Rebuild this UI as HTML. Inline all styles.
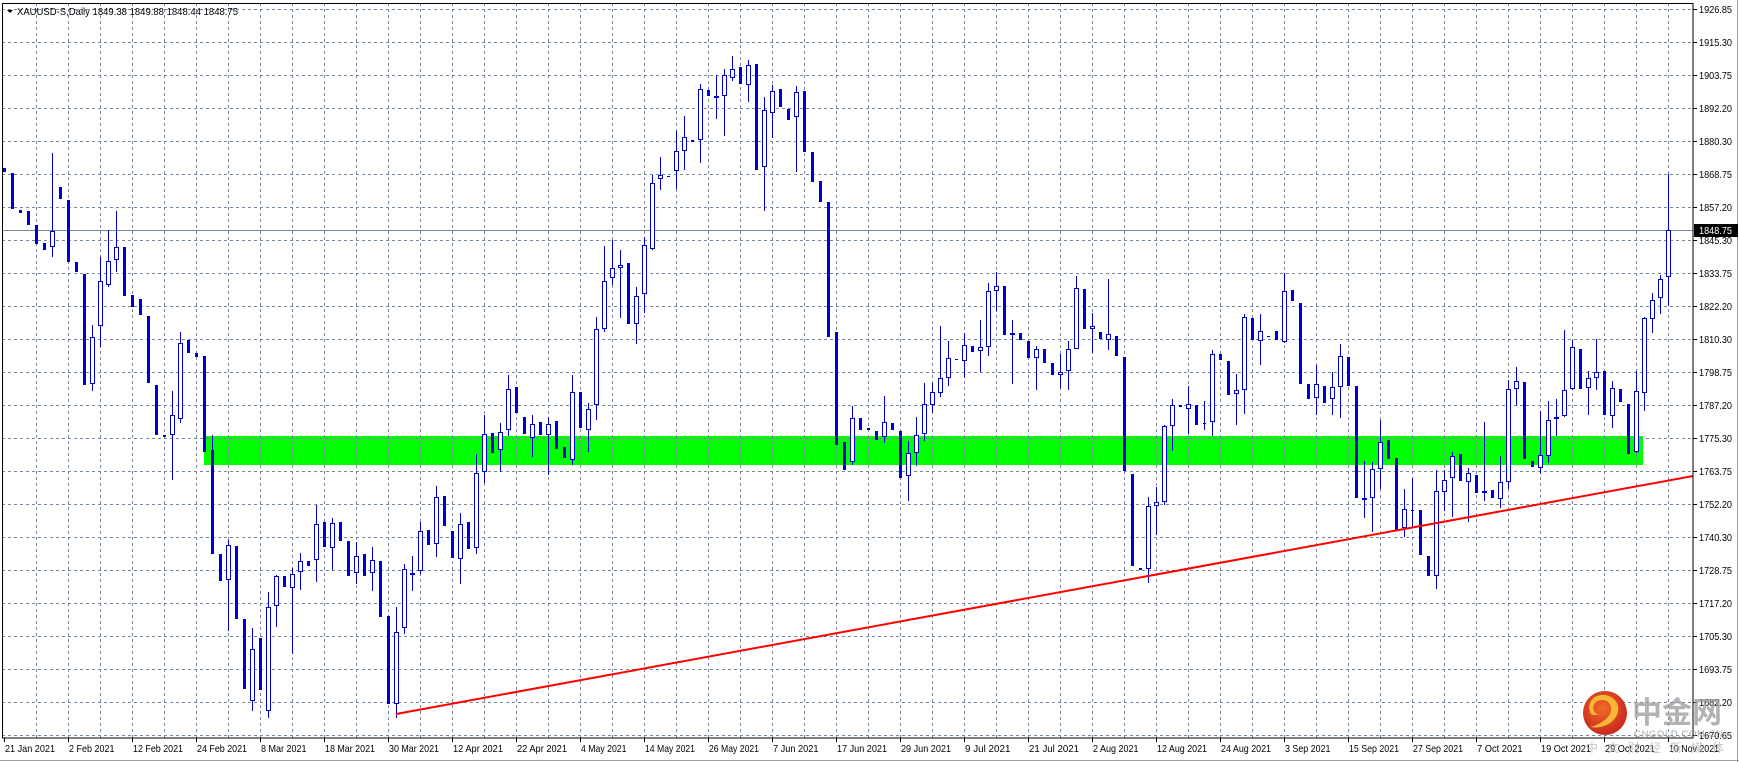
<!DOCTYPE html>
<html><head><meta charset="utf-8">
<style>
html,body{margin:0;padding:0;background:#fff;}
body{width:1739px;height:762px;overflow:hidden;position:relative;font-family:"Liberation Sans",sans-serif;}
svg{position:absolute;left:0;top:0;}
</style></head>
<body>
<svg id="c" width="1739" height="762" xmlns="http://www.w3.org/2000/svg" font-family="Liberation Sans, sans-serif"></svg>
<script>
(function(){
var s='';
var W=1739,H=762;
s+='<rect x="0" y="0" width="'+W+'" height="'+H+'" fill="#fff"/>';
s+='<rect x="204" y="436" width="1439" height="29" fill="#00ff00"/>';
var g='';
for(var k=1;k<=52;k++){var x=4+32*k+0.5;g+='<line x1="'+x+'" y1="3" x2="'+x+'" y2="738"/>';}
for(var k=0;k<=22;k++){var y=9+33*k+0.5;g+='<line x1="2" y1="'+y+'" x2="1693" y2="'+y+'"/>';}
s+='<g stroke="#77889a" stroke-width="1" stroke-dasharray="3,3">'+g+'</g>';
s+='<line x1="2" y1="230.5" x2="1693" y2="230.5" stroke="#778899" stroke-width="1"/>';
function m4(v){return 141+(v-62)*0.34375;}
function m5(v){return 75+(v-99)*0.357;}
function m6(v){return 273+(v-100)/3;}
function m7(v){return 207+(v-82)/3;}
var z4=[[0,140,153,0],[1,155,260,0],[2,262,270,0],[3,267,305,0],[4,305,362,0],[5,360,380,0],[6,325,370,1,98,400],[7,197,231,0],[8,235,413,0],[9,415,443,0],[10,450,773,0],[11,631,768,1,598,790],[12,470,600,1,400,660],[13,410,480,1,320,487],[14,370,408,1,267,443],[15,370,513,0],[16,511,545,0],[17,523,568,0],[18,570,767,0],[19,772,918,0],[20,918,924,0],[21,860,916,1,790,1047],[22,651,870,1,618,883],[23,642,678,0],[24,678,690,0],[25,688,967,0],[26,960,1262,0,918,1262],[27,1263,1341,0],[28,1238,1340,1,1222,1487],[29,1240,1453,0],[30,1452,1655,0],[31,1540,1690,1,1480,1720],[32,1507,1660,0],[33,1417,1720,1,1373,1740],[34,1328,1415,1,1325,1477],[35,1328,1360,0],[36,1322,1363,1,1305,1553],[37,1284,1316,1,1260,1367],[38,1284,1297,0],[39,1177,1281,1,1120,1345],[40,1170,1242,0],[41,1174,1247,1,1160,1310],[42,1170,1227,0],[43,1225,1326,0],[44,1270,1320,1,1228,1350],[45,1263,1328,0],[46,1282,1320,1,1243,1370],[47,1283,1447,0],[48,1443,1700,0],[49,1490,1700,1,1417,1740],[50,1307,1478,1,1292,1497],[51,1318,1325,1,1270,1370],[52,1196,1313,1,1170,1323],[53,1193,1236,0]];
var z5=[[54,1280,1412,1,1250,1450],[55,1278,1362,0],[56,1375,1452,0],[57,1356,1455,1,1325,1525],[58,1352,1427,0],[59,1213,1423,1,1162,1440],[60,1104,1210,1,1050,1243],[61,1103,1157,0],[62,1099,1150,1,1075,1210],[63,978,1093,1,938,1110],[64,972,1046,0],[65,1056,1105,0],[66,1076,1115,1,1050,1168],[67,1072,1108,0],[68,1076,1107,1,1057,1220],[69,1067,1148,0],[70,1140,1173,0],[71,987,1177,1,938,1192],[72,988,1088,0],[73,1034,1093,1,1017,1155],[74,810,1023,1,776,1065],[75,676,810,1,578,818],[76,639,667,1,560,688],[77,631,639,1,588,780],[78,627,797,0],[79,718,796,1,692,853],[80,575,712,1,553,766],[81,401,586,1,378,590],[82,378,390,1,328,422],[83,382,386,0],[84,312,368,1,255,417],[85,272,312,1,213,366],[86,280,287,0],[87,138,282,1,125,346],[88,140,159,0],[89,159,163,1,98,222],[90,99,158,1,82,271],[91,82,107,1,45,117],[92,76,125,0],[93,71,127,1,57,175],[94,67,366,0],[95,197,357,1,160,481],[96,144,205,1,127,276],[97,137,189,0],[98,193,226,0],[99,147,216,1,129,370],[100,143,315,0],[101,316,399,0],[102,395,455,0],[103,454,832,0],[104,820,1135,0]];
var z6=[[105,607,692,0],[106,535,667,1,500,675],[107,535,570,0],[108,565,570,0],[109,573,600,0],[110,547,592,1,468,610],[111,549,572,0],[112,573,716,0],[113,640,710,1,603,785],[114,586,640,1,531,680],[115,493,583,1,430,605],[116,457,496,1,430,520],[117,415,460,1,258,472],[118,355,415,1,303,440],[119,357,362,0],[120,316,364,1,281,416],[121,320,336,0],[122,322,334,1,240,398],[123,154,322,1,131,350],[124,139,154,1,97,215],[125,138,287,0],[126,280,286,1,240,432],[127,280,300,0],[128,303,354,0],[129,328,355,1,318,450],[130,327,369,0],[131,369,405,0],[132,397,406,1,342,444],[133,327,394,1,303,450],[134,145,328,1,108,328],[135,147,267,0],[136,259,268,1,220,340],[137,276,297,0],[138,283,301,1,117,332],[139,288,348,0],[140,351,695,0],[141,702,980,0],[142,985,990,0],[143,799,988,1,771,1031],[144,787,799,1,741,885],[145,558,788,1,555,795],[146,495,560,1,477,635],[147,495,503,0],[148,493,508,1,438,582],[149,495,555,0],[150,549,554,0,483,572],[151,343,548,1,330,590],[152,342,362,0],[153,363,465,0],[154,451,463,1,402,557],[155,232,452,1,222,522],[156,234,300,0],[157,274,304,1,222,375]];
var z7=[[158,468,472,0],[159,453,480,0],[160,333,488,1,280,490],[161,330,365,0],[162,370,614,0],[163,612,657,0],[164,613,655,1,555,705],[165,618,671,0],[166,622,658,1,578,707],[167,529,622,1,492,716],[168,531,620,0],[169,618,956,0],[170,955,961,1,843,1016],[171,868,955,1,846,1058],[172,787,868,1,720,927],[173,782,837,0],[174,836,1050,0],[175,988,1045,1,927,1073],[176,990,995,0,896,1045],[177,990,1127,0],[178,1128,1190,0],[179,934,1190,1,870,1228],[180,902,937,1,870,995],[181,829,895,1,817,1013],[182,824,905,0],[183,880,907,1,864,1027],[184,885,941,0],[185,934,940,1,726,965],[186,931,956,0],[187,907,958,1,828,985],[188,628,907,1,600,927],[189,604,628,1,562,680],[190,606,839,0],[191,843,863,0],[192,826,865,1,693,884],[193,721,829,1,663,851],[194,712,718,1,657,768],[195,631,710,1,450,713],[196,502,627,1,480,632],[197,508,627,0],[198,595,625,1,575,707],[199,577,595,1,477,632],[200,573,706,0],[201,625,710,1,603,745],[202,627,668,0],[203,672,822,0],[204,634,818,1,575,820],[205,415,640,1,412,695],[206,361,418,1,341,461],[207,298,355,1,287,404],[208,151,292,1,-17,378]];
var C='#0000cd',c='';
function add(arr,f){arr.forEach(function(d){
 var x=4+8*d[0];var bt=f(d[1]),bb=f(d[2]);if(bb-bt<1)bb=bt+1;
 var wt=d.length>4?f(d[4]):bt,wb=d.length>4?f(d[5]):bb;
 bt=Math.round(bt);bb=Math.round(bb);wt=Math.round(wt);wb=Math.round(wb);
 if(wt<bt)c+='<rect x="'+(x)+'" y="'+wt+'" width="1" height="'+(bt-wt)+'" fill="'+C+'"/>';
 if(wb>bb)c+='<rect x="'+(x)+'" y="'+bb+'" width="1" height="'+(wb-bb)+'" fill="'+C+'"/>';
 if(d[3]){c+='<rect x="'+(x-1.5)+'" y="'+(bt+0.5)+'" width="4" height="'+Math.max(1,bb-bt-1)+'" fill="#fff" stroke="'+C+'" stroke-width="1"/>';}
 else{c+='<rect x="'+(x-1)+'" y="'+bt+'" width="3" height="'+(bb-bt)+'" fill="'+C+'"/>';}
});}
add(z4,m4);add(z5,m5);add(z6,m6);add(z7,m7);
s+=c;
s+='<line x1="396" y1="714" x2="1693" y2="476" stroke="#ff0000" stroke-width="2"/>';
s+='<rect x="2.5" y="3.5" width="1690.5" height="734.5" fill="none" stroke="#000" stroke-width="1"/>';
s+='<line x1="0" y1="760.5" x2="1739" y2="760.5" stroke="#a0a0a0"/>';
s+='<line x1="1737.5" y1="0" x2="1737.5" y2="762" stroke="#a0a0a0"/>';
var pr=["1926.85","1915.30","1903.75","1892.20","1880.30","1868.75","1857.20","1845.30","1833.75","1822.20","1810.30","1798.75","1787.20","1775.30","1763.75","1752.20","1740.30","1728.75","1717.20","1705.30","1693.75","1682.20","1670.65"];
var t='';
for(var k=0;k<23;k++){var y=9+33*k;t+='<line x1="1693" y1="'+(y+0.5)+'" x2="1697" y2="'+(y+0.5)+'" stroke="#000"/>';
 t+='<text x="1699" y="'+(y+4)+'" font-size="10.5" textLength="33" lengthAdjust="spacingAndGlyphs" fill="#000">'+pr[k]+'</text>';}
t+='<rect x="1694" y="224" width="44" height="13" fill="#000"/><text x="1699" y="234" font-size="10.5" textLength="33" lengthAdjust="spacingAndGlyphs" fill="#fff">1848.75</text>';
var dl=["21 Jan 2021","2 Feb 2021","12 Feb 2021","24 Feb 2021","8 Mar 2021","18 Mar 2021","30 Mar 2021","12 Apr 2021","22 Apr 2021","4 May 2021","14 May 2021","26 May 2021","7 Jun 2021","17 Jun 2021","29 Jun 2021","9 Jul 2021","21 Jul 2021","2 Aug 2021","12 Aug 2021","24 Aug 2021","3 Sep 2021","15 Sep 2021","27 Sep 2021","7 Oct 2021","19 Oct 2021","29 Oct 2021","10 Nov 2021"];
for(var k=0;k<dl.length;k++){var x=4+64*k;t+='<line x1="'+(x+0.5)+'" y1="738" x2="'+(x+0.5)+'" y2="742" stroke="#000"/>';
 t+='<text x="'+(x+1)+'" y="752" font-size="10.5" textLength="'+(dl[k].length*4.55).toFixed(1)+'" lengthAdjust="spacingAndGlyphs" fill="#000">'+dl[k]+'</text>';}
t+='<path d="M7 10 L13 10 L10 13 Z" fill="#000"/>';
t+='<text x="17" y="15" font-size="10.5" textLength="221" lengthAdjust="spacingAndGlyphs" fill="#000">XAUUSD-S,Daily  1849.38 1849.88 1848.44 1848.75</text>';
t+='<defs><radialGradient id="rg" cx="45%" cy="40%" r="60%"><stop offset="0" stop-color="#f26a2a"/><stop offset="1" stop-color="#c8281e"/></radialGradient></defs>';
t+='<circle cx="1605" cy="713" r="22" fill="url(#rg)"/>';
t+='<path d="M1599 715 C1590 712 1592 700 1602 700 C1612 700 1614 712 1607 718 C1602 723 1595 726 1590 727 C1600 729 1612 725 1617 715 C1622 703 1612 694 1601 695 C1590 696 1586 708 1592 715 Z" fill="#f7b733"/>';
t+='<text x="1632" y="723" font-size="30" font-weight="bold" fill="#9a9a9a" fill-opacity="0.75" font-family="Liberation Sans, Noto Sans CJK SC, sans-serif">中金网</text>';
t+='<text x="1634" y="737" font-size="9.5" fill="#a8a8a8" letter-spacing="0.6">CNGOLD.COM.CN</text>';
t+='<text x="1586" y="752" font-size="12" fill="#b8b8b8" fill-opacity="0.8" letter-spacing="9" font-family="Liberation Sans, Noto Sans CJK SC, sans-serif">中文财经新媒体</text>';
s+=t;
document.getElementById('c').innerHTML=s;
})();
</script>
</body></html>
